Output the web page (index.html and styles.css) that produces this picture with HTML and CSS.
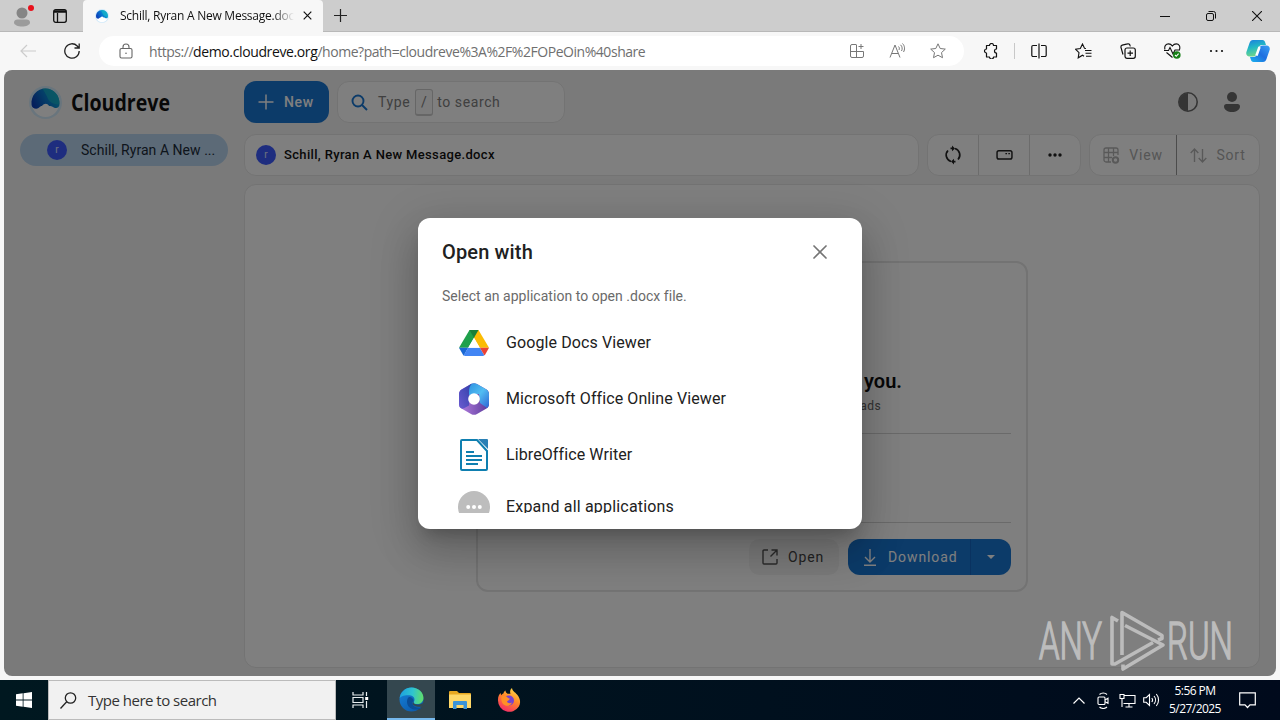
FILE: index.html
```html
<!DOCTYPE html>
<html lang="en">
<head>
    <meta charset="UTF-8">
    <meta name="viewport" content="width=device-width, initial-scale=1.0">
    <title>Schill, Ryran A New Message.docx</title>
    <link rel="stylesheet" href="styles.css">
</head>
<body>

    <svg width="0" height="0" class="defs">
        <defs>
            <linearGradient id="wave" x1="0" y1="0.6" x2="1" y2="0.2">
                <stop offset="0" stop-color="#0b3fb8"/>
                <stop offset="0.45" stop-color="#0878d0"/>
                <stop offset="1" stop-color="#13b5cf"/>
            </linearGradient>
            <linearGradient id="copA" x1="0" y1="0" x2="0.3" y2="1">
                <stop offset="0" stop-color="#1b7ce0"/>
                <stop offset="0.5" stop-color="#22b8c4"/>
                <stop offset="1" stop-color="#6fd68a"/>
            </linearGradient>
            <linearGradient id="copB" x1="1" y1="0" x2="0" y2="1">
                <stop offset="0" stop-color="#3aa0f5"/>
                <stop offset="0.5" stop-color="#1f6fe0"/>
                <stop offset="1" stop-color="#1bb5ee"/>
            </linearGradient>
            <linearGradient id="offA" x1="0" y1="1" x2="1" y2="0">
                <stop offset="0" stop-color="#6a5bd0"/>
                <stop offset="1" stop-color="#2f3fa8"/>
            </linearGradient>
            <linearGradient id="offB" x1="0" y1="0" x2="1" y2="1">
                <stop offset="0" stop-color="#2b8fe0"/>
                <stop offset="0.5" stop-color="#52bdf2"/>
                <stop offset="1" stop-color="#2c63d4"/>
            </linearGradient>
            <linearGradient id="offC" x1="0" y1="0" x2="1" y2="0">
                <stop offset="0" stop-color="#b57fe0"/>
                <stop offset="1" stop-color="#5a3a9c"/>
            </linearGradient>
            <linearGradient id="edgeA" x1="0" y1="0.2" x2="1" y2="0.3">
                <stop offset="0" stop-color="#1c9fe0"/>
                <stop offset="0.55" stop-color="#2fc4cf"/>
                <stop offset="1" stop-color="#5fdd6d"/>
            </linearGradient>
            <linearGradient id="edgeB" x1="0" y1="0" x2="0.8" y2="1">
                <stop offset="0" stop-color="#1683dc"/>
                <stop offset="1" stop-color="#0c58a8"/>
            </linearGradient>
            <linearGradient id="fox" x1="0.8" y1="0" x2="0.3" y2="1">
                <stop offset="0" stop-color="#ffe04a"/>
                <stop offset="0.45" stop-color="#ff8a28"/>
                <stop offset="1" stop-color="#f52a68"/>
            </linearGradient>
        </defs>
        <symbol id="logo" viewBox="0 0 32 32">
            <circle cx="16" cy="16" r="16" fill="#d2eafa"/>
            <path d="M3 17h26a13 13 0 0 1-26 0z" fill="#fff"/>
            <path d="M2.500 18.500C1.500 9 8 2.400 16 2.400S30.500 9 29.500 18.500c-.5 2.500-2.500 3.500-5 2.500-2.500-1-2.500-2-5-1.500-2-3-4.500-3-7 0-1.500-.5-2.500 2.500-5.500 2.500-2.500 0-4-1-4.500-3.500z" fill="url(#wave)"/>
            <path d="M13 2.700C22 1 30 8 29.500 17.500c-4 .5-9-1-11-5S15 5 13 2.700z" fill="#14b0c8" opacity=".75"/>
        </symbol>
    </svg>

    <!-- Browser window -->
    <div class="tabstrip">
        <svg class="profile" width="30" height="32" viewBox="0 0 30 32">
            <circle cx="14" cy="13" r="5.500" fill="#858585"/>
            <path d="M6 22.500c0-2 1.500-3 3.500-3h9c2 0 3.500 1 3.500 3 0 2.500-4 4-8 4s-8-1.500-8-4z" fill="#9b9b9b"/>
            <circle cx="23" cy="8" r="3" fill="#e8111c"/>
        </svg>
        <svg class="workspaces" width="14" height="14" viewBox="0 0 14 14" fill="none" stroke="#111" stroke-width="1.300">
            <rect x=".7" y=".7" width="12.600" height="12.600" rx="2"/>
            <path d="M1 2.500h12" stroke-width="2.500"/>
            <path d="M4.500 4v9"/>
        </svg>
        <div class="tab">
            <svg width="14" height="14"><use href="#logo"/></svg>
            <span class="tab-title">Schill, Ryran A New Message.docx</span>
            <svg width="9" height="9" viewBox="0 0 9 9" stroke="#111" stroke-width="1.200"><path d="M.7.7l7.600 7.600M8.300.7L.7 8.300"/></svg>
        </div>
        <svg class="new-tab" width="13" height="13" viewBox="0 0 13 13" stroke="#222" stroke-width="1.200"><path d="M6.500 0v13M0 6.500h13"/></svg>
        <div class="window-buttons">
            <svg width="10" height="10" viewBox="0 0 10 10" stroke="#111"><path d="M0 5.500h10"/></svg>
            <svg width="10" height="10" viewBox="0 0 10 10" fill="none" stroke="#111"><rect x=".5" y="2.500" width="7" height="7" rx="1.500"/><path d="M2.500.5h5a2 2 0 0 1 2 2v5"/></svg>
            <svg width="10" height="10" viewBox="0 0 10 10" stroke="#111" stroke-width="1.100"><path d="M0 0l10 10M10 0L0 10"/></svg>
        </div>
    </div>

    <div class="toolbar">
        <svg class="back" width="16" height="14" viewBox="0 0 16 14" fill="none" stroke="#ccc" stroke-width="1.200"><path d="M16 7H1M7 1L1 7l6 6"/></svg>
        <svg class="reload" width="16" height="16" viewBox="0 0 16 16" fill="none" stroke="#222" stroke-width="1.300"><path d="M15.200 8a7.200 7.200 0 1 1-2-5L15 5M15.200.5V5h-4.700"/></svg>
        <div class="address">
            <svg width="14" height="16" viewBox="0 0 14 16" fill="none" stroke="#666" stroke-width="1.100"><rect x="1" y="5.500" width="12" height="9.500" rx="1.500"/><path d="M4 5.500V4a3 3 0 0 1 6 0v1.500"/><circle cx="7" cy="10.300" r=".8" fill="#666" stroke="none"/></svg>
            <span class="url">https://<b>demo.cloudreve.org</b>/home?path=cloudreve%3A%2F%2FOPeOin%40share</span>
            <svg width="16" height="16" viewBox="0 0 16 16" fill="none" stroke="#777"><path d="M7 1.500H3A1.500 1.500 0 0 0 1.500 3v10A1.500 1.500 0 0 0 3 14.500h10a1.500 1.500 0 0 0 1.500-1.500V8.500h-13M7.500 1.500v13M12 1v5M9.500 3.500h5"/></svg>
            <svg width="17" height="16" viewBox="0 0 17 16" fill="none" stroke="#777"><path d="M1 14.500L6 2l5 12.500M3 10.500h6M9.500 3.500c1 .8 1 2.500.5 3.500M11.500 1.800c2 1.700 2 4.500 1 6.200M13.500.5c2.500 2.500 2.500 6 1 8.500"/></svg>
            <svg width="16" height="16" viewBox="0 0 16 16" fill="none" stroke="#777"><path d="M8 .8l2.200 4.700 5.100.6-3.800 3.500 1 5.100L8 12.200l-4.500 2.500 1-5.100L.7 6.100l5.100-.6z" stroke-linejoin="round"/></svg>
        </div>
        <svg class="ext" width="16" height="16" viewBox="0 0 16 16" fill="none" stroke="#111" stroke-width="1.200"><path d="M3.500 2.500h3a2 2 0 0 1 4 0h3V6a2 2 0 0 0 0 4v4h-3a2 2 0 0 1-4 0h-3v-4a2 2 0 1 1 0-4z" stroke-linejoin="round"/></svg>
        <span class="tool-divider"></span>
        <div class="tools">
            <svg width="16" height="16" viewBox="0 0 16 16" fill="none" stroke="#111" stroke-width="1.200"><path d="M6 2.500H2A1.200 1.200 0 0 0 .8 3.700v8.600A1.200 1.200 0 0 0 2 13.500h4M10 2.500h4a1.200 1.200 0 0 1 1.200 1.200v8.600a1.200 1.200 0 0 1-1.200 1.200h-4M8 .5v15"/></svg>
            <svg width="17" height="16" viewBox="0 0 17 16" fill="none" stroke="#111" stroke-width="1.100"><path d="M11 5.500L9.500 5.300 7.500 1 5.300 5.500l-4.800.7 3.500 3.400-.8 5.200 4.300-2.600 1.500 1M10 7.500h6.500M10.500 10.300h6M11 13.200h5.500"/></svg>
            <svg width="16" height="16" viewBox="0 0 16 16" fill="none" stroke="#111" stroke-width="1.200"><rect x="5" y="5" width="10.300" height="10.300" rx="2"/><path d="M10.200 7.500v5.500M7.500 10.200H13M3 11.500L.9 4.200a2 2 0 0 1 1.300-2.100L7.500.9A2 2 0 0 1 10 2.400l.4 1"/></svg>
            <svg width="17" height="16" viewBox="0 0 17 16" fill="none" stroke="#111" stroke-width="1.100"><path d="M1 6.500C0 3 2 .9 4.500.9 6.500.9 8 2.500 8.300 3 8.700 2.500 10 .9 12.300.9 15 .9 16.500 3.500 15.500 6.500M0 7.500h4.500L6 4.500l3 6.500 2-4h5M2.500 9.500l6 5"/><circle cx="12.800" cy="12" r="3.800" fill="#178017" stroke="none"/><path d="M11 12l1.300 1.300 2.300-2.600" stroke="#fff"/></svg>
            <svg width="16" height="16" viewBox="0 0 16 16" fill="#111"><circle cx="2" cy="8" r="1.100"/><circle cx="7.500" cy="8" r="1.100"/><circle cx="13" cy="8" r="1.100"/></svg>
        </div>
        <svg class="copilot" width="24" height="22" viewBox="0 0 24 22">
            <path d="M7 0h9.500c1.500 0 2.300 1 2.700 2.500L20 5h-4c-2 0-2.700 1-3.200 2.500L10.500 14c-.7 1.700-1.500 2.500-3.500 2.500H3.500C1 16.500-.3 14.500.4 12L3.500 3C4.200 1 5.200 0 7 0z" fill="url(#copA)"/>
            <path d="M17 22H7.500C6 22 5.200 21 4.800 19.500L4 17h3.500c2 0 3-1 3.500-2.500L13.500 8c.7-1.700 1.500-2.500 3.500-2.500h3.500c2.500 0 3.800 2 3.100 4.500L20.500 19c-.7 2-1.700 3-3.500 3z" fill="url(#copB)"/>
            <path d="M10.500 15.500l3-8.500" stroke="#fff" stroke-width="2.500"/>
        </svg>
    </div>

    <!-- Cloudreve page -->
    <div class="app">
        <aside class="sidebar">
            <div class="brand">
                <svg width="33" height="33"><use href="#logo"/></svg>
                <svg width="106" height="42"><text class="brand-name" x="1" y="30" textLength="99" lengthAdjust="spacingAndGlyphs">Cloudreve</text></svg>
            </div>
            <div class="nav-item"><span class="avatar">r</span><span class="nav-label">Schill, Ryran A New ...</span></div>
        </aside>

        <main class="main">
            <div class="topbar">
                <div class="btn-new">
                    <svg width="16" height="16" viewBox="0 0 16 16" stroke="#fff" stroke-width="1.500"><path d="M8 .5v15M.5 8h15"/></svg>
                    New
                </div>
                <div class="search">
                    <svg width="17" height="17" viewBox="0 0 17 17" fill="none" stroke="#1976d2" stroke-width="1.900"><circle cx="7" cy="7" r="5.500"/><path d="M11 11l5 5"/></svg>
                    <span>Type</span><kbd>/</kbd><span>to search</span>
                </div>
                <div class="top-icons">
                    <svg width="20" height="20" viewBox="0 0 20 20"><circle cx="10" cy="10" r="9.200" fill="none" stroke="#6b6b6b" stroke-width="1.600"/><path d="M10 1a9 9 0 0 0 0 18z" fill="#6b6b6b"/></svg>
                    <svg width="16" height="20" viewBox="0 0 16 20" fill="#6b6b6b"><circle cx="8" cy="5" r="5"/><path d="M2.500 12h11A2.500 2.500 0 0 1 16 14.500C16 18 12 20 8 20s-8-2-8-5.500A2.500 2.500 0 0 1 2.500 12z"/></svg>
                </div>
            </div>

            <div class="pathrow">
                <div class="pathbar"><span class="avatar">r</span><span>Schill, Ryran A New Message.docx</span></div>
                <div class="group actions">
                    <div><svg width="18" height="20" viewBox="0 0 18 20" fill="none" stroke="#222" stroke-width="1.700"><path d="M7 16.500A6.700 6.700 0 0 1 4 5.500M11 3.500a6.700 6.700 0 0 1 3 11M9 3.400H6.500M9 16.600h2.500"/><path d="M8 .5l3 2.900-3 2.900zM10 13.700l-3 2.900 3 2.900z" fill="#222" stroke="none"/></svg></div>
                    <div><svg width="17" height="10" viewBox="0 0 18 11" fill="none" stroke="#222" stroke-width="1.600"><rect x=".8" y=".8" width="16.400" height="9.200" rx="2"/><path d="M10 4h1.800M13.200 4H15"/></svg></div>
                    <div><svg width="14" height="4" viewBox="0 0 14 4" fill="#222"><circle cx="2" cy="2" r="1.700"/><circle cx="7" cy="2" r="1.700"/><circle cx="12" cy="2" r="1.700"/></svg></div>
                </div>
                <div class="group sorting">
                    <div><svg width="17" height="17" viewBox="0 0 17 17" fill="none" stroke="#b3b3b3" stroke-width="1.300"><path d="M8 15H3a2 2 0 0 1-2-2V3a2 2 0 0 1 2-2h10a2 2 0 0 1 2 2v5M1 5.500h14M1 10.500h8M5.500 1v14M10.500 1v8"/><circle cx="12.500" cy="13" r="2.700" stroke-width="2"/></svg>View</div>
                    <div><svg width="17" height="15" viewBox="0 0 17 15" fill="none" stroke="#b3b3b3" stroke-width="1.400"><path d="M4.500 14V1M.7 5l3.800-4 3.800 4M12.500 1v13M8.700 10l3.800 4 3.800-4"/></svg>Sort</div>
                </div>
            </div>

            <div class="content">
                <div class="card">
                    <h2>you.</h2>
                    <p>ads</p>
                    <div class="card-body"></div>
                    <div class="card-actions">
                        <div class="btn-open">
                            <svg width="16" height="16" viewBox="0 0 16 16" fill="none" stroke="#555" stroke-width="1.400"><path d="M6 1H2a1 1 0 0 0-1 1v12a1 1 0 0 0 1 1h12a1 1 0 0 0 1-1v-4M9.500 1H15v5.500M15 1L8.500 7.500"/></svg>
                            Open
                        </div>
                        <div class="btn-download">
                            <div class="dl-main">
                                <svg width="14" height="17" viewBox="0 0 14 17" fill="none" stroke="#fff" stroke-width="1.400"><path d="M7 0v12.500M2 8l5 5 5-5M1 16.200h12"/></svg>
                                Download
                            </div>
                            <div class="dl-more"><svg width="8" height="4" viewBox="0 0 8 4" fill="#fff"><path d="M0 0h8L4 4z"/></svg></div>
                        </div>
                    </div>
                </div>
            </div>
        </main>

        <!-- Dialog over the page -->
        <div class="backdrop">
            <div class="dialog">
                <div class="dialog-head">
                    <h1>Open with</h1>
                    <svg width="14" height="14" viewBox="0 0 14 14" stroke="#757575" stroke-width="1.700" stroke-linecap="round"><path d="M1 1l12 12M13 1L1 13"/></svg>
                </div>
                <p class="hint">Select an application to open .docx file.</p>
                <div class="apps">
                    <div class="app-row">
                        <svg width="32" height="32" viewBox="0 0 32 32">
                            <path d="M20.500 3L31 20.800h-9.200L11.500 3z" fill="#fbbc04"/>
                            <path d="M11.500 3h5.500L16 10.800 10.200 20.800H1z" fill="#1ea04b"/>
                            <path d="M11.500 3h9L16 10.800z" fill="#188038"/>
                            <path d="M1 20.800h9.200L5.600 28.800z" fill="#1967d2"/>
                            <path d="M10.200 20.800h11.600l4.600 7.500c-.5.400-1 .7-1.700.7H7.300c-.7 0-1.200-.3-1.700-.7z" fill="#4285f4"/>
                            <path d="M21.800 20.800H31l-3.600 6.400c-.3.500-.6.900-1 1.100z" fill="#ea4335"/>
                            <path d="M16 11l5.700 9.800H10.300z" fill="#fff"/>
                        </svg>
                        <span>Google Docs Viewer</span>
                    </div>
                    <div class="app-row">
                        <svg width="32" height="32" viewBox="0 0 32 32">
                            <path d="M13 1a6 6 0 0 1 6 0l9.500 5.500C30 7.500 31 9 31 11v10c0 2-1 3.500-2.500 4.500L19 31a6 6 0 0 1-6 0l-9.500-5.500C2 24.500 1 23 1 21V11c0-2 1-3.500 2.500-4.500z" fill="url(#offC)"/>
                            <path d="M12.500 1.300C15 0 17 0 19 1l9.500 5.500C30 7.500 31 9 31 11v10c0 1.500-.7 3-2 4L22 20l-1-9-10 1C9 8 9 3.500 12.500 1.300z" fill="url(#offB)"/>
                            <path d="M14 .6L3.500 6.500C2 7.500 1 9 1 11v10.500c0 3 2.500 5 5 3.800l5-2.800V10c0-4 .5-7 3-9.400z" fill="url(#offA)"/>
                            <circle cx="16" cy="16" r="5.800" fill="#fff"/>
                        </svg>
                        <span>Microsoft Office Online Viewer</span>
                    </div>
                    <div class="app-row">
                        <svg width="32" height="32" viewBox="0 0 32 32" fill="none" stroke="#0f7fb0" stroke-width="2">
                            <path d="M19 1H4a1 1 0 0 0-1 1v28a1 1 0 0 0 1 1h24a1 1 0 0 0 1-1V12z"/>
                            <path d="M8 13h8M8 17h16M8 21h16M8 25h12" stroke-width="1.800"/>
                            <path d="M20 0h9a1 1 0 0 1 1 1v9z" fill="#2a80b5" stroke="none"/>
                        </svg>
                        <span>LibreOffice Writer</span>
                    </div>
                    <div class="app-row expand">
                        <svg width="32" height="32" viewBox="0 0 32 32"><circle cx="16" cy="16" r="16" fill="#bdbdbd"/><g fill="#fff"><circle cx="10.200" cy="16" r="2"/><circle cx="16" cy="16" r="2"/><circle cx="21.800" cy="16" r="2"/></g></svg>
                        <span>Expand all applications</span>
                    </div>
                </div>
            </div>
        </div>
    </div>

    <svg class="watermark" width="200" height="66" viewBox="0 0 200 66">
        <text x="3" y="50" textLength="63" lengthAdjust="spacingAndGlyphs">ANY</text>
        <text x="131" y="50" textLength="66" lengthAdjust="spacingAndGlyphs">RUN</text>
        <g fill="none" stroke="#bcbcbc" stroke-width="3.600" stroke-linejoin="round">
            <path d="M82 12l-6-3.500V55h3l38-21.500"/>
            <path d="M86 46V3.500l40 23v3l-4 1.500"/>
            <path d="M89 16.500L127 36 87 60v-4.500"/>
        </g>
    </svg>

    <!-- Windows taskbar -->
    <div class="taskbar">
        <div class="start"><svg width="16" height="16" viewBox="0 0 16 16" fill="#fff"><path d="M0 2.200L6.700 1.300v6.300H0zM7.500 1.200L16 0v7.600H7.500zM0 8.400h6.700v6.300L0 13.800zM7.500 8.400H16V16l-8.500-1.200z"/></svg></div>
        <div class="task-search">
            <svg width="17" height="17" viewBox="0 0 17 17" fill="none" stroke="#222" stroke-width="1.300"><circle cx="10.500" cy="6" r="5.200"/><path d="M6.700 9.800L.5 16.500"/></svg>
            Type here to search
        </div>
        <div class="tasks">
            <div class="task"><svg width="17" height="16" viewBox="0 0 17 16" fill="none" stroke="#e8eef0" stroke-width="1.200"><path d="M1 0v3h10V0M1 16v-3h10v3M1 5.500h10v5H1zM14.500 0v4M14.500 9v7"/><rect x="13.200" y="5" width="3" height="3" fill="#fff" stroke="none"/></svg></div>
            <div class="task active">
                <svg width="25" height="25" viewBox="0 0 24 24">
                    <circle cx="12" cy="12" r="11.500" fill="url(#edgeB)"/>
                    <path d="M.6 11C1.200 5 6 .5 12 .5c7 0 11.500 5 11.500 10 0 3.700-2.800 5.800-6 5.800-2.500 0-3.700-1-3.200-2 1.500-2.500 0-6.300-4.300-6.300C6 8 2 8.500.6 11z" fill="url(#edgeA)"/>
                    <path d="M9.500 9.500c-2.500 2-2.500 7 .5 10 3 2.800 8 3 12 .3-2.500.7-6.500.2-8.500-2.600-1.300-1.700-1-3 .5-3.700 0-2.300-2-4.200-4.500-4z" fill="#0b4d96"/>
                    <path d="M14 14c-.8 1.500 1 3 4 3 2.200 0 4-.7 5.500-1.800-.4 1.300-1 2.500-1.700 3.500-4 1-8.800-.7-8.800-3.200 0-.6.400-1.200 1-1.500z" fill="#34474f"/>
                </svg>
            </div>
            <div class="task">
                <svg width="22" height="20" viewBox="0 0 22 20"><path d="M0 2a1 1 0 0 1 1-1h7l2 2h11a1 1 0 0 1 1 1v14H0z" fill="#e8a820"/><path d="M0 4.500h22V18H0z" fill="#ffd868"/><path d="M4 19v-7a1 1 0 0 1 1-1h12a1 1 0 0 1 1 1v7h-3.500v-4h-7v4z" fill="#3a94d8"/></svg>
            </div>
            <div class="task">
                <svg width="24" height="24" viewBox="0 0 24 24"><path d="M1 12.500C.8 9 2 6.500 3.500 5l.7 2.200C5 6 6 5.500 6.500 5.500 6.700 4 7.500 3 8.500 2.500c0 1.500.8 2.500 2 3.200h3C12.500 3.500 13.500 1 15 0c.3 3 3 4 5 6.500 3.500 4 4 8.500 1.700 12.300A11.300 11.300 0 0 1 1 12.500z" fill="url(#fox)"/><circle cx="12" cy="12.500" r="5" fill="#7542d0"/><path d="M4.500 8.500c2-1 5-.5 6.500 1.500 1.500.2 2 .7 1.500 1.500s-2 1-2.500 2c.5 1.800 3 2.200 5 1-1.500 3.500-6 4.500-9 1.500-1.500-2-2-5-1.500-7.500z" fill="#ff9026"/></svg>
            </div>
        </div>
        <div class="tray">
            <svg width="12" height="7" viewBox="0 0 12 7" fill="none" stroke="#fff" stroke-width="1.200"><path d="M.5 6.500L6 1l5.500 5.500"/></svg>
            <svg width="13" height="17" viewBox="0 0 13 17" fill="none" stroke="#fff" stroke-width="1.100"><rect x="1" y="5" width="7" height="7.500" rx="1"/><path d="M8 8l3-1.700v5L8 9.700M2.500 2.500C4.500.5 8 .5 10 2.500M2.500 15c2 2 5.500 2 7.500 0"/></svg>
            <svg width="17" height="15" viewBox="0 0 17 15" fill="none" stroke="#fff" stroke-width="1.100"><path d="M5.500 2.500H16v8H4.500M10 10.500V14M6.500 14h7M1 1.500h4v4H1zM3 5.500V14"/></svg>
            <svg width="17" height="14" viewBox="0 0 17 14" fill="none" stroke="#fff" stroke-width="1.100"><path d="M.7 4.700h2.500L6.500 1.500v11L3.200 9.300H.7zM8.800 5c1 1.200 1 2.800 0 4M11 3c2 2.300 2 5.700 0 8M13.300 1c3 3.500 3 8.500 0 12"/></svg>
        </div>
        <div class="clock"><span>5:56 PM</span><span>5/27/2025</span></div>
        <svg class="notice" width="17" height="17" viewBox="0 0 17 17" fill="none" stroke="#fff" stroke-width="1.200"><path d="M.7.800h15.600v12H11L8.500 15.500 6 12.800H.7z"/></svg>
    </div>

</body>
</html>
```
FILE: styles.css
```css
* {
    box-sizing: border-box;
}

body {
    margin: 0;
    width: 1280px;
    height: 720px;
    overflow: hidden;
    position: relative;
    background: #f7f7f7;
    font-family: 'Roboto', sans-serif;
    display: flex;
    flex-direction: column;
}

svg {
    flex: none;
    display: block;
}

.defs {
    position: absolute;
}

/* Tab strip */
.tabstrip {
    height: 32px;
    flex: none;
    background: #cdcdcd;
    border-bottom: 1px solid #b8b8b8;
    display: flex;
    align-items: center;
}

.profile {
    margin-left: 8px;
}

.workspaces {
    margin-left: 15px;
}

.tab {
    margin-left: 16px;
    width: 240px;
    height: 32px;
    background: #f7f7f7;
    border-radius: 4px 4px 0 0;
    display: flex;
    align-items: center;
    padding: 0 11px 0 12px;
}

.tab-title {
    width: 174px;
    margin: 0 9px 0 11px;
    overflow: hidden;
    white-space: nowrap;
    font: 12px 'Open Sans', sans-serif;
    letter-spacing: -0.25px;
    color: #111;
    mask-image: linear-gradient(to right, #000 88%, transparent);
}

.new-tab {
    margin-left: 11px;
}

.window-buttons {
    margin-left: auto;
    margin-right: 18px;
    display: flex;
    gap: 36px;
}

/* Address row */
.toolbar {
    height: 38px;
    flex: none;
    display: flex;
    align-items: center;
    padding: 0 10px 0 20px;
}

.reload {
    margin-left: 28px;
}

.address {
    margin-left: 19px;
    width: 865px;
    height: 30px;
    border-radius: 15px;
    background: white;
    display: flex;
    align-items: center;
    gap: 24px;
    padding: 0 18px 0 20px;
}

.url {
    flex: 1;
    margin-left: -8px;
    font: 14px 'Open Sans', sans-serif;
    letter-spacing: -0.46px;
    color: #6f6f6f;
}

.url b {
    font-weight: 400;
    letter-spacing: -0.38px;
    color: #111;
}

.ext {
    margin-left: 19px;
}

.tool-divider {
    width: 1px;
    height: 16px;
    background: #c8c8c8;
    margin: 0 16px 0 15px;
}

.tools {
    display: flex;
    gap: 28px;
}

.copilot {
    margin-left: auto;
}

/* Page */
.app {
    position: relative;
    width: 1272px;
    height: 606px;
    margin: 0 4px;
    border-radius: 8px;
    overflow: hidden;
    background: #f5f5f5;
    display: flex;
}

.sidebar {
    width: 240px;
    padding: 11px 16px;
}

.brand {
    height: 42px;
    display: flex;
    align-items: center;
    gap: 8px;
    padding-left: 9px;
}

.brand-name {
    font: 700 23px 'Open Sans', sans-serif;
    fill: #111;
}

.nav-item {
    margin-top: 11px;
    height: 32px;
    border-radius: 16px;
    background: #b9d5ef;
    display: flex;
    align-items: center;
    gap: 14px;
    padding-left: 27px;
    font-size: 14px;
    letter-spacing: 0.04px;
    color: #1c2a38;
}

.avatar {
    width: 20px;
    height: 20px;
    flex: none;
    border-radius: 50%;
    background: #3d5afe;
    color: #dde2ff;
    font-size: 10px;
    font-weight: 400;
    line-height: 20px;
    text-align: center;
}

.main {
    flex: 1;
    padding: 11px 16px 8px 0;
    display: flex;
    flex-direction: column;
}

.topbar {
    height: 42px;
    display: flex;
    gap: 8px;
    font-size: 14px;
}

.btn-new {
    width: 85px;
    border-radius: 12px;
    background: #1976d2;
    color: white;
    display: flex;
    align-items: center;
    gap: 10px;
    padding-left: 14px;
    font-weight: 500;
    letter-spacing: 0.6px;
}

.search {
    width: 228px;
    border: 1px solid #e6e6e6;
    border-radius: 12px;
    background: #fff;
    color: #808080;
    display: flex;
    align-items: center;
    padding-left: 13px;
    letter-spacing: 0.6px;
}

.search svg {
    margin-right: 10px;
}

.search kbd {
    width: 18px;
    height: 27px;
    margin: 0 4px 0 5px;
    border: 1px solid #ccc;
    border-bottom-width: 2px;
    border-radius: 3px;
    background: #f8f8f8;
    font: 14px/24px 'Roboto', sans-serif;
    text-align: center;
}

.top-icons {
    margin-left: auto;
    margin-right: 20px;
    display: flex;
    align-items: center;
    gap: 26px;
}

.pathrow {
    margin-top: 11px;
    height: 42px;
    display: flex;
    gap: 8px;
}

.pathbar,
.group,
.content,
.card {
    border: 1px solid #e6e6e6;
    border-radius: 12px;
    background: #fff;
}

.pathbar {
    flex: 1;
    display: flex;
    align-items: center;
    gap: 8px;
    padding: 0 0 1px 11px;
    font-size: 13px;
    font-weight: 500;
    letter-spacing: 0.34px;
    color: #111;
}

.group {
    display: flex;
}

.group div {
    display: flex;
    align-items: center;
    justify-content: center;
    gap: 9px;
}

.group div + div {
    border-left: 1px solid #d8d8d8;
}

.actions {
    width: 154px;
}

.actions div {
    width: 51px;
}

.actions div:first-child {
    width: 50px;
}

.sorting {
    width: 171px;
    color: #ababab;
    font-size: 14px;
    letter-spacing: 0.8px;
}

.sorting div {
    flex: 1;
}

.sorting div + div {
    flex: none;
    width: 83px;
    border-left-color: #999;
}

.content {
    margin-top: 8px;
    height: 484px;
    padding: 76px 231px;
}

.card {
    height: 331px;
    padding: 0 15px;
    border-width: 2px;
    text-align: right;
    color: #111;
}

.card h2 {
    margin: 104px 109px 0 0;
    font-size: 20px;
    line-height: 28px;
    font-weight: 600;
}

.card p {
    margin: 1px 130px 0 0;
    font-size: 12px;
    line-height: 20px;
    letter-spacing: 0.4px;
    color: #666;
}

.card-body {
    height: 90px;
    margin-top: 17px;
    border-top: 1px solid #d4d4d4;
    border-bottom: 1px solid #d4d4d4;
}

.card-actions {
    margin-top: 16px;
    height: 36px;
    display: flex;
    justify-content: flex-end;
    gap: 9px;
    font-size: 14px;
    letter-spacing: 0.9px;
}

.btn-open {
    width: 90px;
    border-radius: 10px;
    background: #f5f5f5;
    color: #444;
    display: flex;
    align-items: center;
    gap: 10px;
    padding-left: 13px;
}

.btn-download {
    width: 163px;
    border-radius: 12px;
    background: #1976d2;
    color: white;
    display: flex;
}

.dl-main {
    width: 123px;
    display: flex;
    align-items: center;
    gap: 11px;
    padding-left: 15px;
    border-right: 1px solid #1565c0;
}

.dl-more {
    flex: 1;
    display: flex;
    align-items: center;
    justify-content: center;
}

/* Dialog */
.backdrop {
    position: absolute;
    inset: 0;
    background: rgba(0, 0, 0, 0.5);
    display: flex;
    align-items: center;
    justify-content: center;
}

.dialog {
    width: 444px;
    height: 311px;
    margin-top: 1px;
    border-radius: 12px;
    background: white;
    box-shadow: 0 11px 15px -7px rgba(0, 0, 0, 0.2), 0 24px 38px 3px rgba(0, 0, 0, 0.14), 0 9px 46px 8px rgba(0, 0, 0, 0.12);
    color: #212121;
}

.dialog-head {
    height: 68px;
    display: flex;
    align-items: center;
    justify-content: space-between;
    padding: 0 35px 0 24px;
}

.dialog h1 {
    margin: 0;
    font-size: 20px;
    font-weight: 500;
    letter-spacing: 0.15px;
}

.hint {
    margin: 0 24px;
    font-size: 14px;
    line-height: 20px;
    letter-spacing: 0.03px;
    color: #6a6a6a;
}

.apps {
    height: 198px;
    margin: 9px 24px 0;
    overflow: hidden;
}

.app-row {
    height: 56px;
    display: flex;
    align-items: center;
    gap: 16px;
    padding-left: 16px;
    font-size: 16px;
    letter-spacing: 0.1px;
}

.app-row span {
    padding-bottom: 2px;
}

.expand {
    height: 48px;
    letter-spacing: 0.18px;
}

/* Watermark */
.watermark {
    position: absolute;
    left: 1036px;
    top: 609px;
}

.watermark text {
    font: 300 51px 'Roboto', sans-serif;
    fill: #bcbcbc;
    stroke: #bcbcbc;
    stroke-width: 1.6px;
}

/* Taskbar */
.taskbar {
    height: 40px;
    margin-top: 4px;
    flex: none;
    background: linear-gradient(to right, #001820, #00101e 60%, #000a1c);
    display: flex;
    align-items: center;
    color: white;
    font-family: 'Open Sans', sans-serif;
}

.tasks {
    display: flex;
    gap: 1px;
}

.start,
.task {
    width: 48px;
    height: 40px;
    display: flex;
    align-items: center;
    justify-content: center;
}

.task:first-child {
    margin-right: 2px;
}

.task-search {
    width: 288px;
    height: 40px;
    background: #f1f1f1;
    border: 1px solid #bbb;
    display: flex;
    align-items: center;
    gap: 11px;
    padding-left: 11px;
    font-size: 15px;
    letter-spacing: -0.5px;
    color: #333;
}

.active {
    background: #34474f;
    border-bottom: 2px solid #76b9ed;
}

.tray {
    margin-left: auto;
    display: flex;
    align-items: center;
    gap: 9px;
}

.tray svg:first-child {
    margin-right: 3px;
}

.tray svg:last-child {
    margin-left: -2px;
}

.clock {
    width: 64px;
    margin-left: 3px;
    display: flex;
    flex-direction: column;
    align-items: center;
    font-size: 12px;
    line-height: 18px;
    letter-spacing: -0.55px;
}

.notice {
    margin: 0 24px 0 12px;
}
```
